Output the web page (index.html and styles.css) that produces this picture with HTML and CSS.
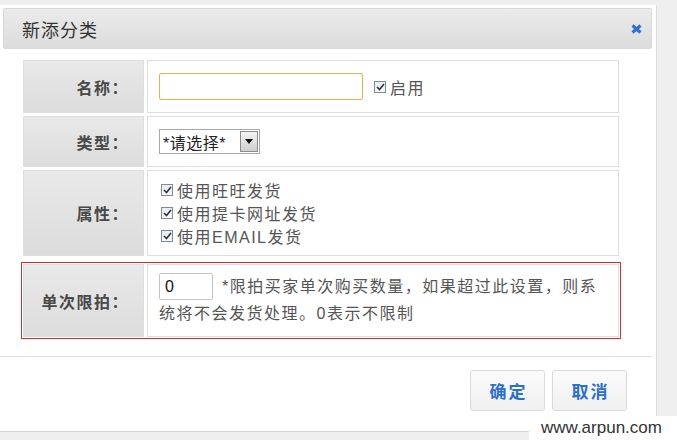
FILE: index.html
```html
<!DOCTYPE html>
<html lang="zh-CN">
<head>
<meta charset="utf-8">
<title>新添分类</title>
<link rel="stylesheet" href="styles.css">
</head>
<body>
<div class="dialog">
  <div class="dlg-head">
    <span class="dlg-title">新添分类</span>
    <span class="close" aria-label="关闭"><svg width="11" height="10" viewBox="0 0 11 10"><path d="M1.5 1.5 L9.5 8.5 M9.5 1.5 L1.5 8.5" stroke="#2f6fd6" stroke-width="3" stroke-linecap="butt"/></svg></span>
  </div>
  <div class="form">
    <div class="row r1">
      <div class="lbl">名称：</div>
      <div class="val val-inline">
        <input class="txt txt-name" type="text">
        <span class="chk"><svg width="9" height="8" viewBox="0 0 9 8"><path d="M1 4 L3.5 6.5 L8 1" fill="none" stroke="#333" stroke-width="1.6"/></svg></span>
        <span class="chk-text">启用</span>
      </div>
    </div>
    <div class="row r2">
      <div class="lbl">类型：</div>
      <div class="val val-inline">
        <div class="select"><span class="select-text">*请选择*</span><span class="select-arrow"><svg width="8" height="5" viewBox="0 0 8 5"><path d="M0 0 H8 L4 5 Z" fill="#111"/></svg></span></div>
      </div>
    </div>
    <div class="row r3">
      <div class="lbl">属性：</div>
      <div class="val val-list">
        <div class="opt"><span class="chk"><svg width="9" height="8" viewBox="0 0 9 8"><path d="M1 4 L3.5 6.5 L8 1" fill="none" stroke="#333" stroke-width="1.6"/></svg></span><span class="chk-text">使用旺旺发货</span></div>
        <div class="opt"><span class="chk"><svg width="9" height="8" viewBox="0 0 9 8"><path d="M1 4 L3.5 6.5 L8 1" fill="none" stroke="#333" stroke-width="1.6"/></svg></span><span class="chk-text">使用提卡网址发货</span></div>
        <div class="opt"><span class="chk"><svg width="9" height="8" viewBox="0 0 9 8"><path d="M1 4 L3.5 6.5 L8 1" fill="none" stroke="#333" stroke-width="1.6"/></svg></span><span class="chk-text">使用EMAIL发货</span></div>
      </div>
    </div>
    <div class="row-hl">
      <div class="row r4">
        <div class="lbl">单次限拍：</div>
        <div class="val val-text"><input class="txt txt-num" type="text" value="0"><span class="hint">*限拍买家单次购买数量，如果超过此设置，则系统将不会发货处理。0表示不限制</span></div>
      </div>
    </div>
  </div>
  <div class="footer">
    <button class="btn" type="button">确定</button>
    <button class="btn" type="button">取消</button>
  </div>
</div>
<div class="watermark">www.arpun.com</div>
</body>
</html>
```
FILE: styles.css
```css
html, body {
  margin: 0;
  padding: 0;
}
body {
  background: #efefef;
  font-family: "Liberation Sans", "Noto Sans CJK SC", sans-serif;
  color: #555;
  width: 677px;
  height: 440px;
  overflow: hidden;
  position: relative;
}
.dialog {
  margin-top: 5px;
  width: 657px;
  height: 427px;
  box-sizing: border-box;
  background: #fff;
  border-right: 1px solid #dcdcdc;
  border-bottom: 1px solid #d4d4d4;
  display: flex;
  flex-direction: column;
}
.dlg-head {
  margin: 3px 4px 0 3px;
  height: 41px;
  box-sizing: border-box;
  border: 1px solid #d9d9d9;
  border-radius: 2px;
  background: linear-gradient(#ebebeb, #dcdcdc);
  display: flex;
  align-items: center;
  justify-content: space-between;
  padding: 0 9px 0 18px;
}
.dlg-title {
  font-size: 18px;
  color: #333;
  letter-spacing: 1px;
}
.close {
  display: flex;
  width: 11px;
  height: 10px;
  margin-top: 1px;
}
.form {
  margin: 11px 0 0 23px;
  width: 596px;
  display: flex;
  flex-direction: column;
  gap: 3px;
}
.row {
  display: flex;
  gap: 3px;
}
.r1 { height: 53px; }
.r2 { height: 51px; }
.r3 { height: 86px; }
.r4 { height: 73px; }
.lbl {
  width: 121px;
  flex: none;
  box-sizing: border-box;
  border: 1px solid #dedede;
  background: linear-gradient(#e9e9e9, #dcdcdc);
  display: flex;
  align-items: center;
  justify-content: flex-end;
  padding-right: 14px;
  font-size: 16px;
  font-weight: bold;
  color: #484848;
  letter-spacing: 1.5px;
}
.val {
  flex: 1;
  box-sizing: border-box;
  border: 1px solid #dedede;
  background: #fff;
  padding: 0 11px;
  font-size: 16px;
  letter-spacing: 1.5px;
  color: #555;
}
.val-inline {
  display: flex;
  align-items: center;
}
.txt {
  box-sizing: border-box;
  height: 27px;
  margin: 0;
  border: 1px solid #bdbdbd;
  border-radius: 2px;
  background: #fff;
  font-family: "Liberation Sans", sans-serif;
  font-size: 16px;
  color: #111;
  padding: 0 5px;
  outline: none;
}
.txt-name {
  width: 204px;
  border-color: #e1b45a;
  box-shadow: inset 0 0 1px rgba(225, 180, 90, 0.5);
}
.chk {
  flex: none;
  box-sizing: border-box;
  width: 12px;
  height: 12px;
  border: 1px solid #7f8aa0;
  background: linear-gradient(#e6ebf3, #f6f8fb);
  display: inline-flex;
  align-items: center;
  justify-content: center;
  margin-right: 4px;
}
.txt-name + .chk {
  margin-left: 11px;
}
.select {
  display: flex;
  align-items: center;
  height: 25px;
  width: 101px;
  box-sizing: border-box;
  border: 1px solid #a8a8a8;
  background: #fff;
  padding: 1px 1px 1px 3px;
}
.select-text {
  flex: 1;
  letter-spacing: 0.5px;
  color: #222;
}
.select-arrow {
  width: 18px;
  height: 21px;
  box-sizing: border-box;
  border: 1px solid #8c8c8c;
  background: linear-gradient(#f4f4f4, #cfcfcf);
  display: flex;
  align-items: center;
  justify-content: center;
}
.val-list {
  display: flex;
  flex-direction: column;
  justify-content: center;
  padding-left: 13px;
}
.opt {
  display: flex;
  align-items: center;
  height: 23px;
}
.row-hl {
  margin: 3px -2px 0 -2px;
  border: 1px solid #c9302f;
  padding: 1px;
}
.val-text {
  padding: 8px 12px 0 11px;
  line-height: 27px;
}
.txt-num {
  width: 54px;
  vertical-align: top;
  margin-right: 9px;
  letter-spacing: 0;
  border-color: #c4c4c4;
}
.footer {
  margin-top: 17px;
  margin-right: 4px;
  border-top: 1px solid #dedede;
  padding: 13px 25px 0 0;
  display: flex;
  justify-content: flex-end;
  gap: 7px;
}
.btn {
  width: 75px;
  height: 41px;
  box-sizing: border-box;
  border: 1px solid #dadada;
  border-radius: 3px;
  background: linear-gradient(#fbfbfb, #f0f0f0);
  font-family: "Liberation Sans", "Noto Sans CJK SC", sans-serif;
  font-size: 17px;
  font-weight: bold;
  letter-spacing: 2px;
  padding: 0 0 0 2px;
  color: #2a6fcf;
}
.watermark {
  position: absolute;
  left: 529px;
  top: 416px;
  width: 148px;
  height: 24px;
  box-sizing: border-box;
  background: #fff;
  padding-left: 12px;
  font-family: "Liberation Sans", sans-serif;
  font-size: 17px;
  line-height: 24px;
  color: #333;
}
```
